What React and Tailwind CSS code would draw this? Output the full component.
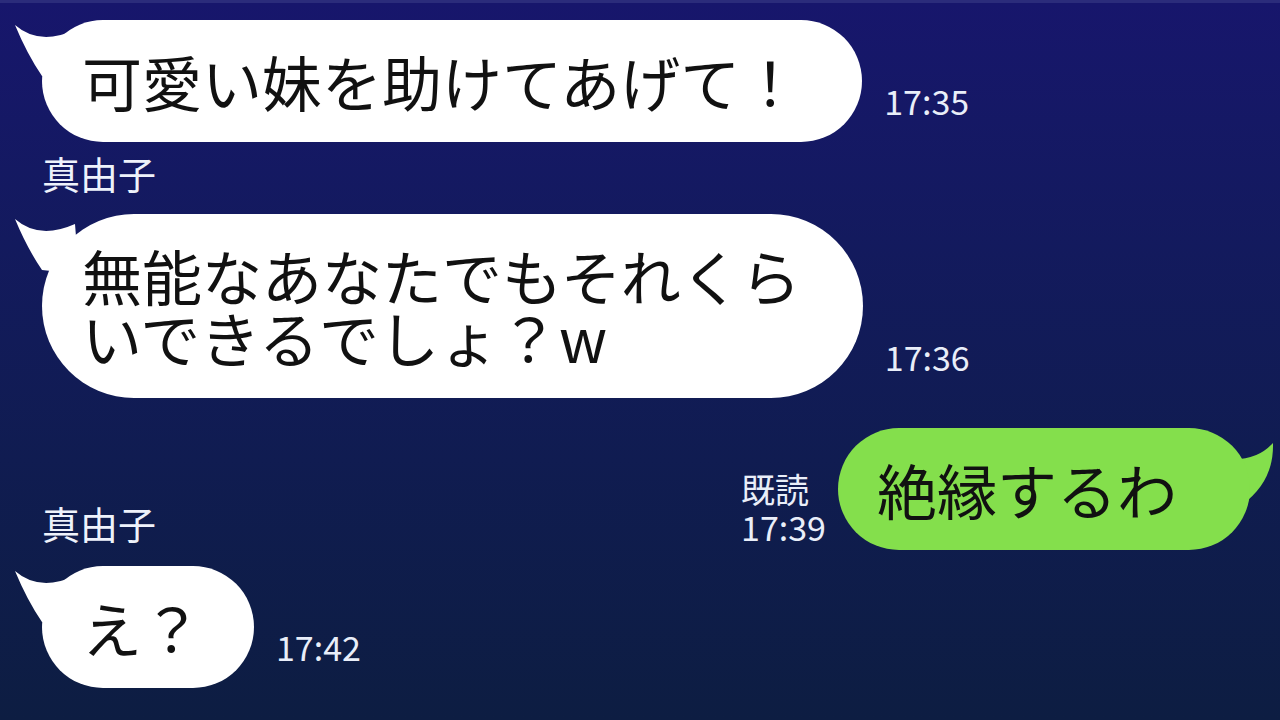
import React from "react";

const jp = { fontFamily: '"Noto Sans CJK JP", "Noto Sans", sans-serif' };

function LeftTail() {
  return (
    <svg
      className="absolute left-[-29px] top-[4px]"
      width="70"
      height="60"
      viewBox="0 0 70 60"
    >
      <path d="M2 1 Q 26 22 62 6 L 66 56 L 29 52 Q 14 30 2 1 Z" fill="#ffffff" />
    </svg>
  );
}

function RightTail() {
  return (
    <svg
      className="absolute right-[-26px] top-[8px]"
      width="70"
      height="70"
      viewBox="0 0 70 70"
    >
      <path d="M67 7 Q 48 28 14 22 L 4 66 L 42 64 Q 68 42 67 7 Z" fill="#84df4c" />
    </svg>
  );
}

function LeftBubble({ children, time, pr = "pr-[62px]" }) {
  return (
    <div className="flex items-end pl-[42px]">
      <div className="relative">
        <LeftTail />
        <div
          className={`relative bg-white rounded-full pl-[40px] ${pr} py-[30px] text-[60px] leading-[62px] text-[#111]`}
        >
          {children}
        </div>
      </div>
      <div className="ml-[22px] mb-[24px] text-[34px] leading-none text-[#e9eef9]">
        {time}
      </div>
    </div>
  );
}

export default function App() {
  return (
    <div
      className="w-[1280px] h-[720px] overflow-hidden border-t-[3px] border-[#2b2c7b] bg-linear-to-b from-[#17166c] to-[#0d1d42] flex flex-col pt-[17px]"
      style={jp}
    >
      <LeftBubble time="17:35">可愛い妹を助けてあげて！</LeftBubble>

      <div className="pl-[42px] mt-[12px] text-[38px] leading-none text-[#eef2fb]">
        真由子
      </div>

      <div className="mt-[22px]">
        <LeftBubble time="17:36">
          無能なあなたでもそれくら
          <br />
          いできるでしょ？w
        </LeftBubble>
      </div>

      <div className="mt-[30px] flex items-end justify-between pr-[30px]">
        <div className="pl-[42px] mb-[8px] text-[38px] leading-none text-[#eef2fb]">
          真由子
        </div>
        <div className="flex items-end">
          <div className="mb-[4px] mr-[12px] text-[34px] leading-[38px] text-[#e9eef9]">
            <div>既読</div>
            <div>17:39</div>
          </div>
          <div className="relative">
            <RightTail />
            <div className="relative bg-[#84df4c] rounded-full pl-[39px] pr-[73px] py-[30px] text-[60px] leading-[62px] text-[#111]">
              絶縁するわ
            </div>
          </div>
        </div>
      </div>

      <div className="mt-[16px]">
        <LeftBubble time="17:42" pr="pr-[52px]">
          え？
        </LeftBubble>
      </div>
    </div>
  );
}
